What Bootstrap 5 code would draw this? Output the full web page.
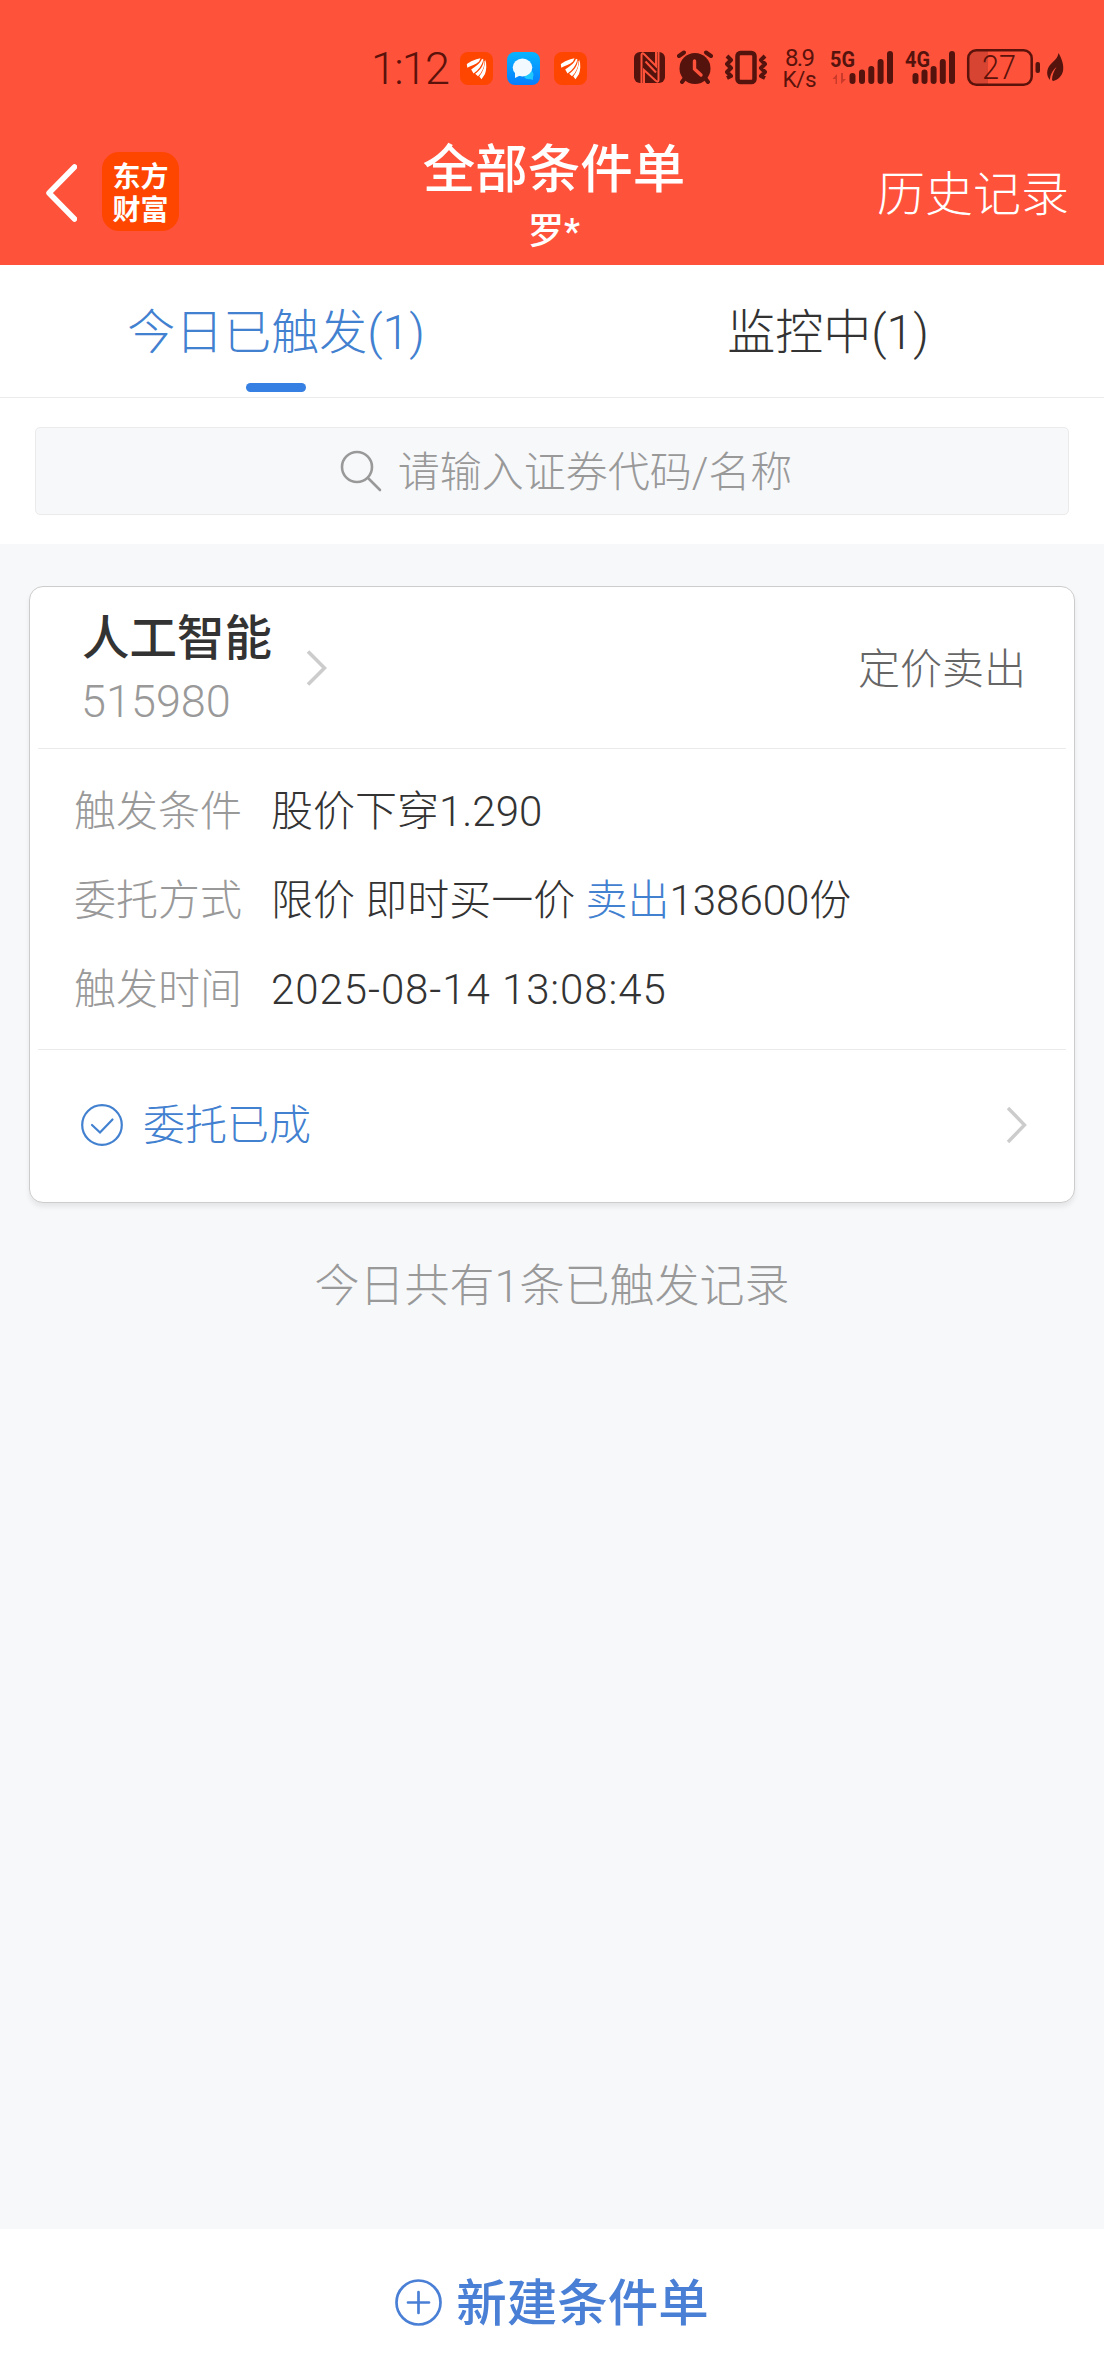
<!DOCTYPE html>
<html lang="zh-CN">
<head>
<meta charset="utf-8">
<meta name="viewport" content="width=device-width, initial-scale=1">
<title>全部条件单</title>
<link href="https://cdn.jsdelivr.net/npm/bootstrap@5.3.0/dist/css/bootstrap.min.css" rel="stylesheet">
<style>
  body { font-family: Roboto, "Noto Sans CJK SC", sans-serif; font-weight: 300; background: #f7f8fa; color: #333; height: 2376px; font-size: 42px; line-height: 60px; }
  svg { display: block; flex: none; }
  .app-head { background: #ff523b; height: 265px; color: #fff; }
  .status { height: 96px; padding: 40px 0 0 367px; color: #5a120b; }
  .status svg { height: 56px; }
  .ink { fill: #54130d; }
  .title-row { height: 169px; padding: 0 35px 0 45px; }
  .side { flex: 1 1 0; }
  .back { margin-top: 68px; }
  .logo { width: 77px; height: 79px; border-radius: 17px; background: #ff4600; font-family: "Noto Sans CJK SC", sans-serif; font-weight: 700; font-size: 28px; line-height: 33px; padding-top: 7px; margin: 56px 0 0 25px; text-align: center; }
  .page-title { font-size: 52.5px; font-weight: 500; line-height: 60px; margin: 44px 6px 0 0; }
  .user { font-size: 36px; font-weight: 500; line-height: 40px; margin: 12px 6px 0 0; }
  .history { font-size: 48px; margin-top: 69px; }
  .tabs { height: 133px; background: #fff; border-bottom: 1px solid #ebebeb; }
  .tab-item { flex: 1 1 0; font-size: 48px; padding-top: 38px; }
  .tab-item.on { color: #4280d0; }
  .bar { width: 60px; height: 9px; border-radius: 4.5px; background: #3580e2; margin-top: 20px; }
  .search-wrap { background: #fff; height: 146px; padding: 29px 35px; }
  .search-box { height: 88px; border: 1px solid #ebebeb; border-radius: 5px; background: #f7f8fa; color: #999; padding-left: 28px; }
  .search-box span { padding-top: 4px; }
  .order { margin: 42px 29px 0; height: 617px; background: #fff; border: 1px solid #ccc; border-radius: 14px; box-shadow: 0 4px 5px rgba(0,0,0,.07); padding: 0 8px; }
  .order-head { height: 162px; border-bottom: 1px solid #ebebeb; padding: 0 40px 0 44px; }
  .stock { font-size: 47.5px; font-weight: 500; color: #333; margin-top: 22px; line-height: 60px; }
  .code { font-size: 45px; color: #999; line-height: 50px; margin-top: 8px; margin-left: -1px; }
  .kind { color: #666; padding-top: 4px; }
  .order-body { height: 301px; border-bottom: 1px solid #ebebeb; padding: 33px 0 0 36px; }
  .line { height: 89px; }
  .lbl { width: 197px; color: #999; }
  .stamp { letter-spacing: .93px; }
  .blue { color: #4280d0; }
  .order-foot { height: 150px; padding: 0 39px 0 43px; }
  .foot-text { margin-left: 20px; padding-top: 1px; }
  .go { margin-left: 34px; }
  .total { color: #999; font-size: 45px; margin-top: 54px; }
  .new-bar { height: 147px; background: #fff; color: #4a7fd6; font-size: 50.5px; font-weight: 500; }
  .new-bar span { padding-top: 3px; }
</style>
<script src="https://cdn.jsdelivr.net/npm/bootstrap@5.3.0/dist/js/bootstrap.bundle.min.js"></script>
</head>
<body class="d-flex flex-column">
<header class="app-head">
  <div class="status d-flex">
    <svg width="93" viewBox="367 40 93 56"><text x="371" y="84" font-size="45" font-weight="300" fill="#5a120b" textLength="79">1:12</text></svg>
    <svg width="47" viewBox="460 40 47 56"><rect x="460" y="52" width="33" height="33" rx="8" fill="#ff4600"/><g id="wing" fill="#fff"><path d="M480.500 58.200C475 59.500 469.500 61.500 466.800 64.300L467.300 67.800C471 65.500 476 64.500 479 61.500z"/><path d="M482 58.800C480.500 63 476 66.500 471.200 69.500L473.500 73.500C478.500 70 482 65.500 483.500 59.500z"/><path d="M483.800 60.500C483.300 66 480 70.500 475.200 73.800L478 76.300C482 72.500 484.500 67 484.600 61z"/><path d="M485.300 59.500C486.800 64.500 486.500 70 485 74L481.500 79.300L479.300 76.500C483 72 485 66 485.300 59.500z"/></g></svg>
    <svg width="47" viewBox="507 40 47 56"><defs><linearGradient id="sky" x2="0" y2="1"><stop stop-color="#08b4ff"/><stop offset="1" stop-color="#067dff"/></linearGradient></defs><rect x="507" y="52" width="33" height="33" rx="8" fill="url(#sky)"/><path d="M530 70a5 5 0 0 1 3 7v3l-3-1a6 6 0 0 1-6-2z" fill="#1fc8ff"/><ellipse cx="522.500" cy="67.500" rx="9.800" ry="9" fill="#f2f9ff"/><path d="M515 72v6l6-3z" fill="#f2f9ff"/></svg>
    <svg width="80" viewBox="554 40 80 56"><rect x="554" y="52" width="33" height="33" rx="8" fill="#ff4600"/><use href="#wing" x="94"/></svg>
    <svg width="43" viewBox="634 40 43 56"><rect class="ink" x="634" y="52" width="31" height="31" rx="6"/><g fill="none" stroke="#ff523b" stroke-width="2"><path d="M641.500 83V55q0-3 3-.5L656 66V51M658.500 52v28q0 3-3 .5L644 70V84"/><path d="M645.500 61.500L656 72.500"/></g></svg>
    <svg width="48" viewBox="677 40 48 56"><g stroke="#54130d" stroke-width="4" stroke-linecap="round" fill="none"><path d="M679 56l5-3.500M711 56l-5-3.500M685 78l-3 4M705 78l3 4"/></g><circle class="ink" cx="695" cy="68.500" r="15.500"/><path d="M694.500 61v8l6.500 6" fill="none" stroke="#ff523b" stroke-width="3.400" stroke-linecap="round"/></svg>
    <svg width="56" viewBox="725 40 56 56"><g fill="none" stroke="#54130d" stroke-linejoin="round"><rect x="737.500" y="53" width="17" height="29" rx="3" stroke-width="4.500"/><path d="M727 56l4 4-4 4 4 4-4 4 4 4-4 2M765 56l-4 4 4 4-4 4 4 4-4 4 4 2" stroke-width="4"/></g></svg>
    <svg width="48" viewBox="781 40 48 56"><g fill="#5a120b" font-weight="400"><text x="785" y="66" font-size="24" textLength="30">8.9</text><text x="782.500" y="86.500" font-size="22.500" textLength="34">K/s</text></g></svg>
    <svg width="74" viewBox="829 40 74 56"><text x="830" y="67" font-size="22.500" font-weight="700" class="ink" textLength="25" lengthAdjust="spacingAndGlyphs">5G</text><path d="M837 84V74l-4.500 5h3v5zM841 73v11l5-5h-3v-6z" fill="#c93a2b"/><path d="M852.500 76v5M862 72.500v8.500M871.300 69v12M880.600 62v19M890 54v27" stroke="#54130d" stroke-width="6" stroke-linecap="round"/></svg>
    <svg width="62" viewBox="903 40 62 56"><text x="905" y="67" font-size="22.500" font-weight="700" class="ink" textLength="25" lengthAdjust="spacingAndGlyphs">4G</text><path d="M915.500 76v5M924.500 72.500v8.500M933.600 69v12M942.800 62v19M952 54v27" stroke="#54130d" stroke-width="6" stroke-linecap="round"/></svg>
    <svg width="80" viewBox="965 40 80 56"><path d="M988 50v35h-12q-8 0-8-8V58q0-8 8-8z" fill="#d74532"/><rect x="968.200" y="50.200" width="63.500" height="34.500" rx="8" fill="none" stroke="#5a120b" stroke-width="2.500"/><rect class="ink" x="1035.500" y="62" width="4.500" height="11" rx="2"/><text x="982" y="79" font-size="33" font-weight="300" fill="#5a120b" textLength="34" lengthAdjust="spacingAndGlyphs">27</text></svg>
    <svg width="24" viewBox="1045 40 24 56"><path class="ink" d="M1058.500 53c4 7 5.500 13 4.500 18s-5 9-10 10l-1-1c0-5 2-9 4.500-13-4 3.500-6.500 8-6.500 13-4-4-3.500-11 0-15 4-4.500 7.500-6 8.500-12z"/></svg>
  </div>
  <div class="title-row d-flex">
    <div class="side d-flex align-items-start">
      <svg class="back" width="32" height="58" viewBox="0 0 32 58"><path d="M29.500 3L4 29l25.500 26" fill="none" stroke="#fff" stroke-width="5.500" stroke-linecap="round" stroke-linejoin="round"/></svg>
      <div class="logo">东方<br>财富</div>
    </div>
    <div class="text-center">
      <div class="page-title">全部条件单</div>
      <div class="user">罗*</div>
    </div>
    <div class="side text-end"><div class="history">历史记录</div></div>
  </div>
</header>
<nav class="tabs d-flex text-center">
  <div class="tab-item on">今日已触发(1)<div class="bar mx-auto"></div></div>
  <div class="tab-item">监控中(1)</div>
</nav>
<div class="search-wrap">
  <div class="search-box d-flex align-items-center justify-content-center">
    <svg width="42" height="42" viewBox="0 0 42 42" class="me-3"><g fill="none" stroke="#999" stroke-width="2.600" stroke-linecap="round"><circle cx="17" cy="17" r="15"/><path d="M28 28l12 12"/></g></svg>
    <span>请输入证券代码/名称</span>
  </div>
</div>
<main class="flex-grow-1">
  <section class="order">
    <div class="order-head d-flex">
      <div>
        <div class="stock">人工智能</div>
        <div class="code">515980</div>
      </div>
      <svg class="go align-self-center" width="21" height="36" viewBox="0 0 21 36"><path d="M2 1.500L18.500 18 2 34.500" fill="none" stroke="#ccc" stroke-width="3.600"/></svg>
      <div class="kind ms-auto align-self-center">定价卖出</div>
    </div>
    <div class="order-body">
      <div class="line d-flex"><div class="lbl">触发条件</div><div>股价下穿1.290</div></div>
      <div class="line d-flex"><div class="lbl">委托方式</div><div>限价 即时买一价 <span class="blue">卖出</span>138600份</div></div>
      <div class="line d-flex"><div class="lbl">触发时间</div><div class="stamp">2025-08-14 13:08:45</div></div>
    </div>
    <div class="order-foot d-flex align-items-center">
      <svg width="42" height="42" viewBox="0 0 42 42"><g fill="none" stroke="#4280d0" stroke-width="2.200" stroke-linecap="round"><circle cx="21" cy="21" r="19.800"/><path d="M11 21l8 7.500 12.500-13"/></g></svg>
      <span class="foot-text blue">委托已成</span>
      <svg class="ms-auto" width="21" height="38" viewBox="0 0 21 38"><path d="M2 2L18.500 19 2 36" fill="none" stroke="#ccc" stroke-width="3.400"/></svg>
    </div>
  </section>
  <div class="total text-center">今日共有1条已触发记录</div>
</main>
<footer class="new-bar d-flex align-items-center justify-content-center">
  <svg width="47" height="47" viewBox="0 0 47 47" style="margin-right:14px"><g fill="none" stroke="#4a7fd6" stroke-width="2.700" stroke-linecap="round"><circle cx="23.500" cy="23.500" r="22"/><path d="M23.500 13v21M13 23.500h21"/></g></svg>
  <span>新建条件单</span>
</footer>
</body>
</html>
